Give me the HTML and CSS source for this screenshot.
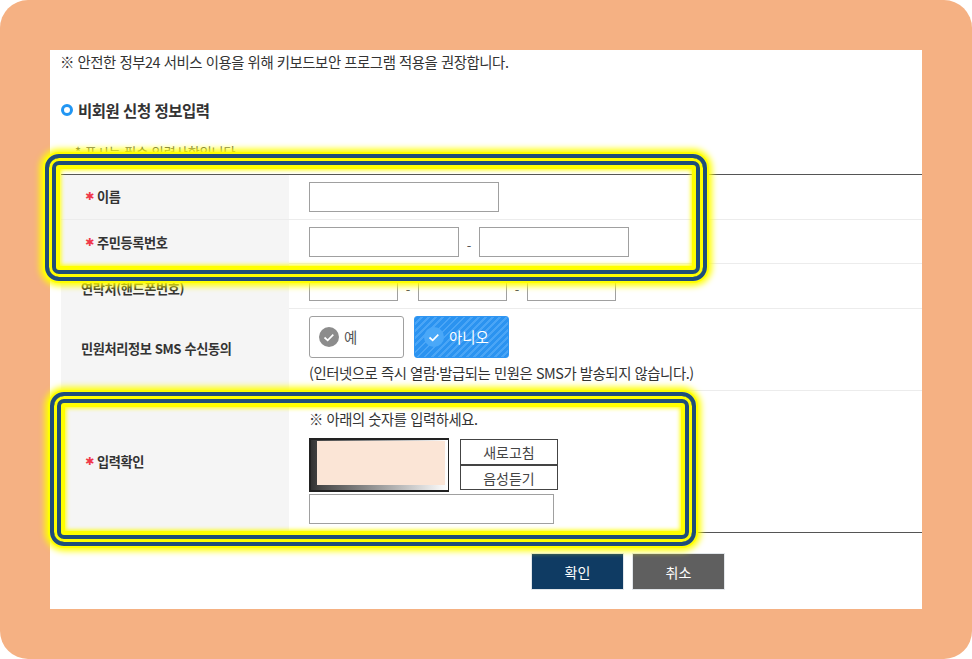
FILE: index.html
```html
<!DOCTYPE html>
<html lang="ko">
<head>
  <meta charset="UTF-8" />
  <meta name="viewport" content="width=device-width, initial-scale=1.0"/>
  <title>비회원 신청 정보입력</title>
  <link rel="stylesheet" href="styles.css">
</head>
<body>

  <div class="frame">
    <div class="panel">
      <p class="notice">※ 안전한 정부24 서비스 이용을 위해 키보드보안 프로그램 적용을 권장합니다.</p>

      <h2 class="section-title"><span class="dot"></span>비회원 신청 정보입력</h2>

      <p class="hint">* 표시는 필수 입력사항입니다.</p>

      <div class="form-table">
        <div class="row row-input">
          <div class="label"><span class="req">✱</span>이름</div>
          <div class="value"><input type="text" class="input input-name"/></div>
        </div>
        <div class="row row-input row-short">
          <div class="label"><span class="req">✱</span>주민등록번호</div>
          <div class="value">
            <input type="text" class="input input-id"/>
            <span class="dash">-</span>
            <input type="text" class="input input-id"/>
          </div>
        </div>
        <div class="row row-input">
          <div class="label label-plain label-low">연락처(핸드폰번호)</div>
          <div class="value">
            <input type="text" class="input input-phone"/>
            <span class="dash">-</span>
            <input type="text" class="input input-phone"/>
            <span class="dash">-</span>
            <input type="text" class="input input-phone"/>
          </div>
        </div>
        <div class="row row-sms">
          <div class="label label-plain label-sms">민원처리정보 SMS 수신동의</div>
          <div class="value value-stack">
            <div class="choices">
              <button class="choice">
                <svg class="check" viewBox="0 0 20 20"><circle cx="10" cy="10" r="10" fill="#8c8c8c"/><path d="M5.5 10.5l3.2 2.8 5.6-5.6" fill="none" stroke="#fff" stroke-width="1.7"/></svg>
                예
              </button>
              <button class="choice choice-on">
                <svg class="check" viewBox="0 0 20 20"><circle cx="10" cy="10" r="10" fill="#4aa8f8"/><path d="M5.5 10.5l3.2 2.8 5.6-5.6" fill="none" stroke="#fff" stroke-width="1.7"/></svg>
                아니오
              </button>
            </div>
            <p class="sms-note">(인터넷으로 즉시 열람·발급되는 민원은 SMS가 발송되지 않습니다.)</p>
          </div>
        </div>
        <div class="row row-captcha">
          <div class="label"><span class="req">✱</span>입력확인</div>
          <div class="value value-stack">
            <p class="captcha-note">※ 아래의 숫자를 입력하세요.</p>
            <div class="captcha-row">
              <div class="captcha-img"><div class="captcha-mask"></div></div>
              <div class="captcha-btns">
                <button class="captcha-btn">새로고침</button>
                <button class="captcha-btn">음성듣기</button>
              </div>
            </div>
            <input type="text" class="input input-captcha"/>
          </div>
        </div>
      </div>

      <div class="actions">
        <button class="btn btn-ok">확인</button>
        <button class="btn btn-cancel">취소</button>
      </div>
    </div>

    <!-- highlight rings over the form -->
    <div class="ring ring-top"></div>
    <div class="ring ring-bottom"></div>
  </div>

</body>
</html>
```

FILE: styles.css
```css
:root {
  --peach: #f5b183;
  --ring-blue: #1f4e79;
  --ring-yellow: #ffff00;
  --text-color: #333333;
}

* {
  margin: 0;
  padding: 0;
  box-sizing: border-box;
  font-family: "Noto Sans CJK KR", "Noto Sans", sans-serif;
}

body {
  background-color: #ffffff;
}

.frame {
  position: relative;
  width: 972px;
  height: 659px;
  padding: 50px;
  background-color: var(--peach);
  border-radius: 28px;
}

.panel {
  height: 559px;
  padding-left: 10px;
  background-color: #ffffff;
  color: var(--text-color);
}

.notice {
  font-size: 14.4px;
  line-height: 24px;
  letter-spacing: -0.45px;
}

.section-title {
  display: flex;
  align-items: center;
  gap: 5px;
  margin-top: 24px;
  margin-left: 1px;
  font-size: 15.5px;
  line-height: 24px;
  font-weight: 700;
  letter-spacing: -0.5px;
}

.dot {
  width: 12px;
  height: 12px;
  border: 3px solid #2196f3;
  border-radius: 50%;
}

.hint {
  margin-top: 18px;
  margin-bottom: 10px;
  padding-left: 15px;
  font-size: 13px;
  line-height: 24px;
  color: #555;
}

.form-table {
  margin-left: 1px;
  border-top: 1px solid #555;
  border-bottom: 1px solid #555;
}

.row {
  display: grid;
  grid-template-columns: 228px 1fr;
  border-bottom: 1px solid #ececec;
}

.row:last-child {
  border-bottom: none;
}

.row-input {
  height: 45px;
}

.row-short {
  height: 44px;
}

.row-sms {
  height: 82px;
}

.row-captcha {
  height: 141px;
}

.label {
  display: flex;
  align-items: center;
  padding-bottom: 1px;
  padding-left: 24px;
  background-color: #f5f5f5;
  font-size: 13.2px;
  font-weight: 700;
  letter-spacing: -0.4px;
}

.label-plain {
  padding-left: 20px;
}

.label-low {
  padding-top: 5px;
}

.label-sms {
  padding-bottom: 3px;
}

.req {
  width: 12px;
  color: #f0384a;
  font-family: "DejaVu Sans", sans-serif;
  font-size: 11px;
  font-weight: 700;
}

.value {
  display: flex;
  align-items: flex-start;
  padding: 7px 0 0 20px;
}

.value-stack {
  flex-direction: column;
}

.input {
  height: 30px;
  border: 1px solid #a0a0a0;
  background-color: #fff;
}

.input-name {
  width: 190px;
}

.input-id {
  width: 150px;
}

.input-phone {
  width: 89px;
}

.input-captcha {
  width: 245px;
  margin-top: 2px;
}

.dash {
  width: 20px;
  text-align: center;
  font-size: 13px;
  line-height: 38px;
  color: #555;
}

.choices {
  display: flex;
  gap: 10px;
}

.choice {
  display: flex;
  align-items: center;
  gap: 5px;
  width: 95px;
  height: 42px;
  padding: 0 0 1px 9px;
  border: 1px solid #a0a0a0;
  border-radius: 3px;
  background-color: #fff;
  color: #555;
  font-size: 14.4px;
}

.choice-on {
  border-color: #2f96f3;
  background: repeating-linear-gradient(-45deg, #2b93f0, #2b93f0 3px, #4aa5f6 3px, #4aa5f6 5px);
  color: #fff;
}

.check {
  width: 20px;
  height: 20px;
}

.sms-note {
  margin-top: 5px;
  font-size: 14.4px;
  line-height: 20px;
  letter-spacing: -0.45px;
}

.captcha-note {
  margin-top: 9px;
  font-size: 14.3px;
  line-height: 24px;
  letter-spacing: -0.4px;
}

.captcha-row {
  display: flex;
  gap: 11px;
  margin-top: 7px;
}

.captcha-img {
  width: 140px;
  height: 54px;
  padding: 1px 3px 5px 6px;
  border: 2px solid #222;
  border-right-width: 1px;
  background: linear-gradient(to right, #333, #4a4a4a 8%, #fff 100%);
}

.captcha-mask {
  height: 100%;
  background-color: #fbe5d6;
}

.captcha-btns {
  display: flex;
  flex-direction: column;
  padding-top: 1px;
}

.captcha-btn {
  width: 98px;
  height: 26px;
  border: 1px solid #444;
  background-color: #fff;
  color: #444;
  font-size: 14px;
}

.captcha-btn + .captcha-btn {
  margin-top: -1px;
  border-top-width: 2px;
}

.actions {
  display: flex;
  gap: 8px;
  margin-top: 20px;
  margin-left: 471px;
}

.btn {
  width: 93px;
  height: 37px;
  border: 1px solid #e2e6ea;
  color: #fff;
  font-size: 14px;
}

.btn-ok {
  background-color: #0f3b63;
}

.btn-cancel {
  background-color: #5f5f5f;
}

.ring {
  position: absolute;
  border: 4px solid var(--ring-blue);
  border-radius: 14px;
  box-shadow:
    0 0 0 2px var(--ring-yellow),
    0 0 6px 5px var(--ring-yellow),
    inset 0 0 0 3px var(--ring-yellow),
    inset 0 0 0 7px var(--ring-blue),
    inset 0 0 0 11px var(--ring-yellow),
    inset 0 0 4px 12px var(--ring-yellow);
}

.ring-top {
  left: 45px;
  top: 154px;
  width: 662px;
  height: 127px;
}

.ring-bottom {
  left: 50px;
  top: 392px;
  width: 646px;
  height: 154px;
}
```
